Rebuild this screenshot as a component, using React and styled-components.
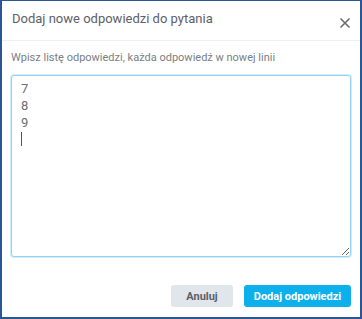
import React from "react";
import styled, { createGlobalStyle } from "styled-components";

const GlobalStyle = createGlobalStyle`
  html, body {
    margin: 0;
    padding: 0;
    background: #fff;
  }
  * {
    box-sizing: border-box;
  }
`;

const Dialog = styled.div`
  width: 362px;
  height: 319px;
  display: flex;
  flex-direction: column;
  background: #fff;
  border: 2px solid #2d5596;
  border-top-width: 1px;
  font-family: Roboto, "Liberation Sans", sans-serif;
`;

const Header = styled.div`
  display: flex;
  justify-content: space-between;
  align-items: flex-start;
  height: 40px;
  padding: 10px 9px 0 10px;
  border-bottom: 1px solid #eceef0;
`;

const Title = styled.div`
  font-size: 13px;
  color: #5c6166;
`;

const Close = styled.button`
  border: 0;
  background: none;
  padding: 0;
  margin-top: 6px;
  width: 12px;
  height: 12px;
  display: flex;
  cursor: pointer;
`;

const Body = styled.div`
  flex: 1;
  display: flex;
  flex-direction: column;
  padding: 10px 9px 0 9px;
`;

const Hint = styled.div`
  font-size: 11px;
  color: #7a8085;
  margin-bottom: 11px;
`;

const AreaWrap = styled.div`
  position: relative;
  height: 182px;
`;

const Area = styled.textarea`
  width: 100%;
  height: 100%;
  border: 1px solid #96d2f8;
  border-radius: 3px;
  padding: 4px 9px;
  font-family: Roboto, "Liberation Sans", sans-serif;
  font-size: 13px;
  line-height: 17px;
  color: #6a6e72;
  outline: none;
  resize: both;
  box-shadow: 0 0 0 1px #d3ecfc;
`;

const Caret = styled.span`
  position: absolute;
  left: 10px;
  top: 57px;
  width: 1px;
  height: 14px;
  background: #555;
`;

const Footer = styled.div`
  display: flex;
  justify-content: flex-end;
  gap: 11px;
  padding: 0 9px 10px 0;
`;

const Button = styled.button`
  height: 22px;
  border: 0;
  border-radius: 3px;
  padding: 0;
  width: ${(p) => (p.$primary ? "107px" : "62px")};
  background: ${(p) => (p.$primary ? "#0db0ea" : "#e0e6ec")};
  color: ${(p) => (p.$primary ? "#fff" : "#5a6066")};
  font-family: Roboto, "Liberation Sans", sans-serif;
  font-size: 11px;
  font-weight: bold;
  cursor: pointer;
`;

export default function App() {
  return (
    <>
      <GlobalStyle />
      <Dialog>
        <Header>
          <Title>Dodaj nowe odpowiedzi do pytania</Title>
          <Close aria-label="Zamknij">
            <svg width="12" height="12" viewBox="0 0 12 12">
              <path d="M2 2 L10 10 M10 2 L2 10" stroke="#6b6f73" strokeWidth="1.7" strokeLinecap="round" />
            </svg>
          </Close>
        </Header>
        <Body>
          <Hint>Wpisz listę odpowiedzi, każda odpowiedź w nowej linii</Hint>
          <AreaWrap>
            <Area readOnly value={"7\n8\n9\n"} />
            <Caret />
          </AreaWrap>
        </Body>
        <Footer>
          <Button>Anuluj</Button>
          <Button $primary>Dodaj odpowiedzi</Button>
        </Footer>
      </Dialog>
    </>
  );
}
